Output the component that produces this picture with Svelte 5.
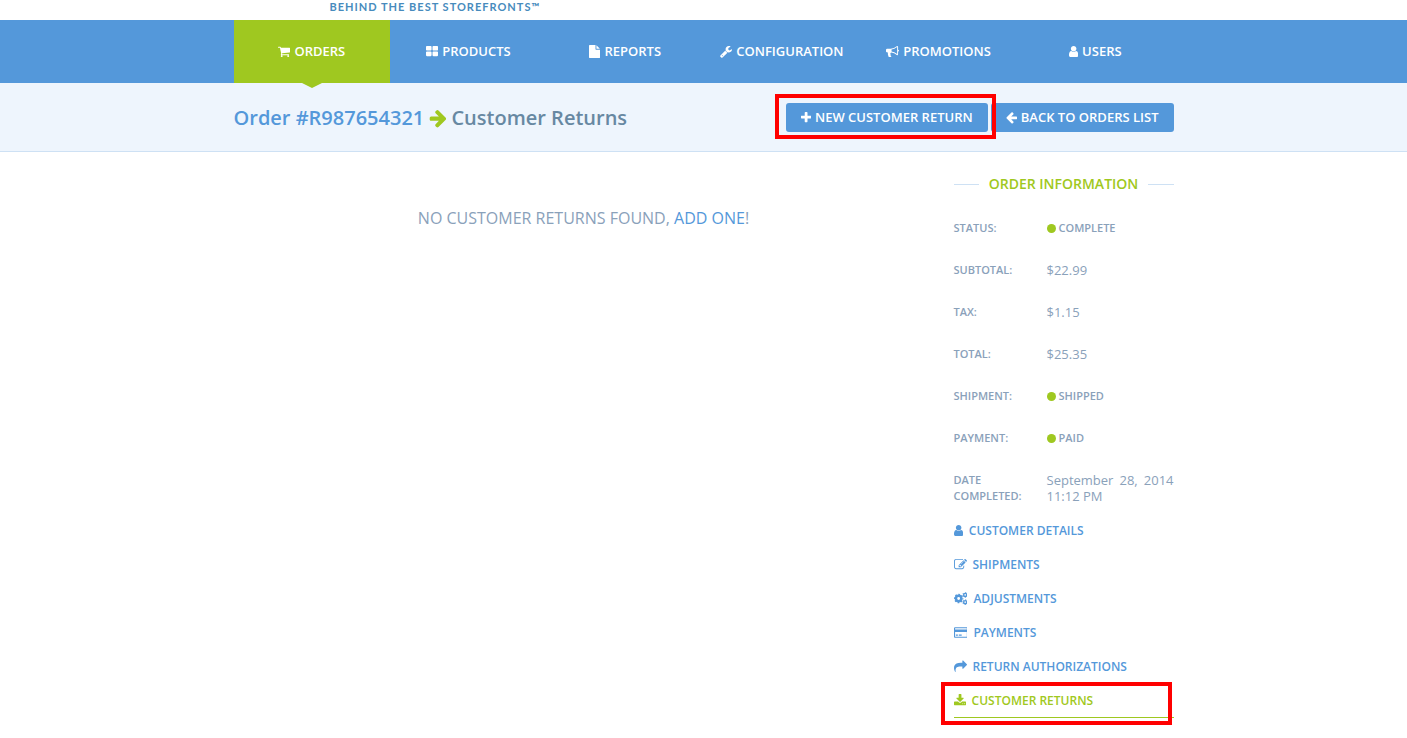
<script>
  const icons = {
    cart: { x: 64, w: 1664, d: 'M704 1536q0 52-38 90t-90 38-90-38-38-90 38-90 90-38 90 38 38 90zm896 0q0 52-38 90t-90 38-90-38-38-90 38-90 90-38 90 38 38 90zm128-1088v512q0 24-16.5 42.5t-40.5 21.5l-1044 122q13 60 13 70 0 16-24 64h920q26 0 45 19t19 45-19 45-45 19h-1024q-26 0-45-19t-19-45q0-11 8-31.5t16-36 21.5-40 15.5-29.5l-177-823h-204q-26 0-45-19t-19-45 19-45 45-19h256q16 0 28.5 6.5t19.5 15.5 13 24.5 8 26 5.5 29.5 4.5 26h1201q26 0 45 19t19 45z' },
    grid: { x: 64, w: 1664, d: 'M832 1024v384q0 52-38 90t-90 38h-512q-52 0-90-38t-38-90v-384q0-52 38-90t90-38h512q52 0 90 38t38 90zm0-768v384q0 52-38 90t-90 38h-512q-52 0-90-38t-38-90v-384q0-52 38-90t90-38h512q52 0 90 38t38 90zm896 768v384q0 52-38 90t-90 38h-512q-52 0-90-38t-38-90v-384q0-52 38-90t90-38h512q52 0 90 38t38 90zm0-768v384q0 52-38 90t-90 38h-512q-52 0-90-38t-38-90v-384q0-52 38-90t90-38h512q52 0 90 38t38 90z' },
    file: { x: 128, w: 1536, d: 'M1152 512v-472q22 14 36 28l408 408q14 14 28 36h-472zm-128 32q0 40 28 68t68 28h544v1056q0 40-28 68t-68 28h-1344q-40 0-68-28t-28-68v-1600q0-40 28-68t68-28h800v544z' },
    wrench: { x: 64, w: 1664, d: 'M448 1472q0-26-19-45t-45-19-45 19-19 45 19 45 45 19 45-19 19-45zm644-420l-682 682q-37 37-90 37-52 0-91-37l-106-108q-38-36-38-90 0-53 38-91l681-681q39 98 114.5 173.5t173.5 114.5zm634-435q0 39-23 106-47 134-164.5 217.5t-258.5 83.5q-185 0-316.5-131.5t-131.5-316.5 131.5-316.5 316.5-131.5q58 0 121.5 16.5t107.5 46.5q16 11 16 28t-16 28l-293 169v224l193 107q5-3 79-48.5t135.5-81 70.5-35.5q15 0 23.5 10t8.5 25z' },
    bullhorn: { x: 0, w: 1792, d: 'M1664 640q53 0 90.5 37.5t37.5 90.5-37.5 90.5-90.5 37.5v384q0 52-38 90t-90 38q-417-347-812-380-58 19-91 66t-31 100.5 40 92.5q-20 33-23 65.5t6 58 33.5 55 48 50 61.5 50.5q-29 58-111.5 83t-168.5 11.5-132-55.5q-7-23-29.5-87.5t-32-94.5-23-89-15-101 3.5-98.5 22-110.5h-122q-66 0-113-47t-47-113v-192q0-66 47-113t113-47h480q435 0 896-384 52 0 90 38t38 90v384zm-128 604v-954q-394 302-768 343v270q377 42 768 341z' },
    user: { x: 256, w: 1280, d: 'M1536 1399q0 109-62.5 187t-150.5 78h-854q-88 0-150.5-78t-62.5-187q0-85 8.5-160.5t31.5-152 58.5-131 94-89 134.5-34.5q131 128 313 128t313-128q76 0 134.5 34.5t94 89 58.5 131 31.5 152 8.5 160.5zm-256-887q0 159-112.5 271.5t-271.5 112.5-271.5-112.5-112.5-271.5 112.5-271.5 271.5-112.5 271.5 112.5 112.5 271.5z' },
    plus: { x: 192, w: 1408, d: 'M1600 736v192q0 40-28 68t-68 28h-416v416q0 40-28 68t-68 28h-192q-40 0-68-28t-28-68v-416h-416q-40 0-68-28t-28-68v-192q0-40 28-68t68-28h416v-416q0-40 28-68t68-28h192q40 0 68 28t28 68v416h416q40 0 68 28t28 68z' },
    left: { x: 128, w: 1536, d: 'M1664 896v128q0 53-32.5 90.5t-84.5 37.5h-704l293 294q38 36 38 90t-38 90l-75 76q-37 37-90 37-52 0-91-37l-651-652q-37-37-37-90 0-52 37-91l651-650q38-38 91-38 52 0 90 38l75 74q38 38 38 91t-38 91l-293 293h704q52 0 84.5 37.5t32.5 90.5z' },
    right: { x: 64, w: 1536, d: 'M1600 960q0 54-37 91l-651 651q-39 37-91 37-51 0-90-37l-75-75q-38-38-38-91t38-91l293-293h-704q-52 0-84.5-37.5t-32.5-90.5v-128q0-53 32.5-90.5t84.5-37.5h704l-293-294q-38-36-38-90t38-90l75-75q38-38 90-38 53 0 91 38l651 651q37 35 37 90z' },
    edit: { x: 0, w: 1792, d: 'M888 1184l116-116-152-152-116 116v56h96v96h56zm440-720q-16-16-33 1l-350 350q-17 17-1 33t33-1l350-350q17-17 1-33zm80 594v190q0 119-84.5 203.5t-203.5 84.5h-832q-119 0-203.5-84.5t-84.5-203.5v-832q0-119 84.5-203.5t203.5-84.5h832q63 0 117 25 15 7 18 23 3 17-9 29l-49 49q-14 14-32 8-23-6-45-6h-832q-66 0-113 47t-47 113v832q0 66 47 113t113 47h832q66 0 113-47t47-113v-126q0-13 9-22l64-64q15-15 35-7t20 29zm-96-738l288 288-672 672h-288v-288zm444 132l-92 92-288-288 92-92q28-28 68-28t68 28l152 152q28 28 28 68t-28 68z' },
    share: { x: 0, w: 1792, d: 'M1792 640q0 26-19 45l-512 512q-19 19-45 19t-45-19-19-45v-256h-224q-98 0-175.5 6t-154 21.5-133 42.5-105.5 69.5-80 101-48.5 138.5-17.5 181q0 55 5 123 0 6 2.5 23.5t2.5 26.5q0 15-8.5 25t-23.5 10q-16 0-28-17-7-9-13-22t-13.5-30-10.5-24q-127-285-127-451 0-199 53-333 162-403 875-403h224v-256q0-26 19-45t45-19 45 19l512 512q19 19 19 45z' },
    download: { x: 64, w: 1664, d: 'M1344 1344q0-26-19-45t-45-19-45 19-19 45 19 45 45 19 45-19 19-45zm256 0q0-26-19-45t-45-19-45 19-19 45 19 45 45 19 45-19 19-45zm128-224v320q0 40-28 68t-68 28h-1472q-40 0-68-28t-28-68v-320q0-40 28-68t68-28h465l135 136q58 56 136 56t136-56l136-136h464q40 0 68 28t28 68zm-325-569q17 41-14 70l-448 448q-18 19-45 19t-45-19l-448-448q-31-29-14-70 17-39 59-39h256v-448q0-26 19-45t45-19h256q26 0 45 19t19 45v448h256q42 0 59 39z' },
    card: { x: 0, w: 1920, d: 'M160 160h1600q66 0 113 47t47 113v1152q0 66-47 113t-113 47h-1600q-66 0-113-47t-47-113v-1152q0-66 47-113t113-47zM180 320q-32 0-32 32v128h1624v-128q0-32-32-32zM148 820v620q0 32 32 32h1560q32 0 32-32v-620zM256 1180h280v160h-280zM660 1180h400v160h-400z' },
    cogs: { x: 0, w: 1920 }
  };

  const tabs = [
    { label: 'Orders', icon: 'cart', active: true },
    { label: 'Products', icon: 'grid' },
    { label: 'Reports', icon: 'file' },
    { label: 'Configuration', icon: 'wrench' },
    { label: 'Promotions', icon: 'bullhorn' },
    { label: 'Users', icon: 'user' }
  ];

  const info = [
    { term: 'Status:', value: 'Complete', state: true },
    { term: 'Subtotal:', value: '$22.99' },
    { term: 'Tax:', value: '$1.15' },
    { term: 'Total:', value: '$25.35' },
    { term: 'Shipment:', value: 'Shipped', state: true },
    { term: 'Payment:', value: 'Paid', state: true },
    { term: 'Date Completed:', value: 'September 28, 2014 11:12 PM' }
  ];

  const links = [
    { label: 'Customer Details', icon: 'user' },
    { label: 'Shipments', icon: 'edit' },
    { label: 'Adjustments', icon: 'cogs' },
    { label: 'Payments', icon: 'card' },
    { label: 'Return Authorizations', icon: 'share' },
    { label: 'Customer Returns', icon: 'download', active: true }
  ];
</script>

{#snippet icon(name)}
  {@const i = icons[name]}
  <svg class="icon" viewBox="{i.x} 0 {i.w} 1792" style="width: {i.w / 1792}em" aria-hidden="true">
    {#if name === 'cogs'}
      <g fill="none" stroke="currentColor">
        <circle cx="640" cy="896" r="370" stroke-width="340" />
        <circle cx="640" cy="896" r="570" stroke-width="180" stroke-dasharray="224 224" stroke-dashoffset="112" />
        <circle cx="1540" cy="400" r="210" stroke-width="200" />
        <circle cx="1540" cy="400" r="330" stroke-width="120" stroke-dasharray="173 173" />
        <circle cx="1540" cy="1400" r="210" stroke-width="200" />
        <circle cx="1540" cy="1400" r="330" stroke-width="120" stroke-dasharray="173 173" />
      </g>
    {:else}
      <path fill="currentColor" fill-rule={name === 'card' ? 'evenodd' : 'nonzero'} d={i.d} />
    {/if}
  </svg>
{/snippet}

<header>
  <div class="brand container"><span class="tagline">BEHIND THE BEST STOREFRONTS™</span></div>
  <nav class="tabs-bar" aria-label="Main">
    <ul class="tabs container">
      {#each tabs as tab}
        <li><a href="#top" class:active={tab.active}>{@render icon(tab.icon)}<span>{tab.label}</span></a></li>
      {/each}
    </ul>
  </nav>
  <div class="title-bar">
    <div class="title-row container">
      <h1><a href="#order">Order #R987654321</a>{@render icon('right')}<span>Customer Returns</span></h1>
      <div class="actions">
        <div class="marked marked-action"><a class="button" href="#new">{@render icon('plus')}<span>New Customer Return</span></a></div>
        <a class="button" href="#list">{@render icon('left')}<span>Back to Orders List</span></a>
      </div>
    </div>
  </div>
</header>

<div class="page container">
  <main>
    <p class="empty">No Customer Returns found, <a href="#new">Add One</a>!</p>
  </main>
  <aside>
    <h2><span>Order Information</span></h2>
    <dl>
      {#each info as row}
        <dt>{row.term}</dt>
        <dd class:state={row.state}>{row.value}</dd>
      {/each}
    </dl>
    <ul class="side-links">
      {#each links as link}
        <li class:active={link.active} class:marked={link.active}>
          <a href="#section">{@render icon(link.icon)}<span>{link.label}</span></a>
        </li>
      {/each}
    </ul>
  </aside>
</div>

<style>
  :global(body) {
    margin: 0;
    background: #fff;
    color: #8aa1ba;
    font-family: "Open Sans", sans-serif;
    font-size: 13px;
  }
  a { color: #5498da; text-decoration: none; }
  ul { list-style: none; margin: 0; padding: 0; }
  .container { width: 100%; max-width: 940px; margin: 0 auto; }
  .icon { height: 1em; flex: none; display: block; }

  .brand { height: 20px; overflow: hidden; }
  .tagline {
    display: block;
    padding-left: 96px;
    font: 700 11px/14px Lato, sans-serif;
    letter-spacing: 1px;
    color: #478bbd;
  }

  .tabs-bar { background: #5498da; }
  .tabs { display: flex; }
  .tabs li { flex: 1; }
  .tabs a {
    position: relative;
    display: flex;
    align-items: center;
    justify-content: center;
    gap: 4px;
    padding: 21px 0;
    line-height: 21px;
    font-weight: 600;
    color: #fff;
    text-transform: uppercase;
  }
  .tabs a.active { background: #9fc820; }
  .tabs a.active::after {
    content: "";
    position: absolute;
    top: 100%;
    left: 50%;
    margin-left: -10px;
    border: solid transparent;
    border-width: 5px 10px 0;
    border-top-color: #9fc820;
  }

  .title-bar { background: #eef5fd; border-bottom: 1px solid #cee1f4; }
  .title-row { display: flex; align-items: center; justify-content: space-between; padding: 20px 0 19px; }
  h1 {
    display: flex;
    align-items: center;
    gap: 5px;
    margin: 0;
    font-size: 20px;
    line-height: 28px;
    font-weight: 600;
    color: #6788a2;
  }
  h1 .icon { color: #9fc820; }
  .actions { display: flex; gap: 3px; }
  .button {
    display: flex;
    align-items: center;
    gap: 4px;
    padding: 4px 15px;
    border-radius: 3px;
    background: #5498da;
    color: #fff;
    font-weight: 600;
    line-height: 21px;
    text-transform: uppercase;
  }

  .marked { position: relative; }
  .marked::after {
    content: "";
    position: absolute;
    z-index: 1;
    border: 4px solid #f00;
    pointer-events: none;
  }
  .marked-action::after { inset: -9px -8px -7px -11px; }

  .page { display: flex; gap: 20px; padding-bottom: 20px; }
  main { flex: 1; }
  .empty {
    margin: 55px 0 0;
    font-size: 16px;
    line-height: 22px;
    text-align: center;
    text-transform: uppercase;
  }
  aside { width: 220px; padding-top: 22px; }
  h2 {
    display: flex;
    align-items: center;
    gap: 10px;
    margin: 0 0 26px;
    font-size: 14px;
    line-height: 20px;
    font-weight: 600;
    color: #9fc820;
    text-transform: uppercase;
    white-space: nowrap;
  }
  h2::before, h2::after { content: ""; flex: 1; border-top: 1px solid #cee1f4; }

  dl {
    display: grid;
    grid-template-columns: 73px 127px;
    gap: 26px 20px;
    margin: 0 0 10px;
    line-height: 16px;
  }
  dt, .state { font-size: 11px; font-weight: 600; text-transform: uppercase; }
  dd { margin: 0; text-align: justify; }
  .state { display: flex; align-items: center; gap: 3px; }
  .state::before { content: ""; width: 9px; height: 9px; border-radius: 50%; background: #9fc820; }

  .side-links a {
    display: flex;
    align-items: center;
    gap: 6px;
    padding: 8px 0;
    border-bottom: 1px solid transparent;
    font-size: 12px;
    line-height: 17px;
    font-weight: 600;
    text-transform: uppercase;
  }
  .side-links .icon { font-size: 13px; }
  .side-links .active a { color: #9fc820; border-color: #9fc820; }
  .side-links .marked::after { inset: -2px 2px -7px -13px; }
</style>
